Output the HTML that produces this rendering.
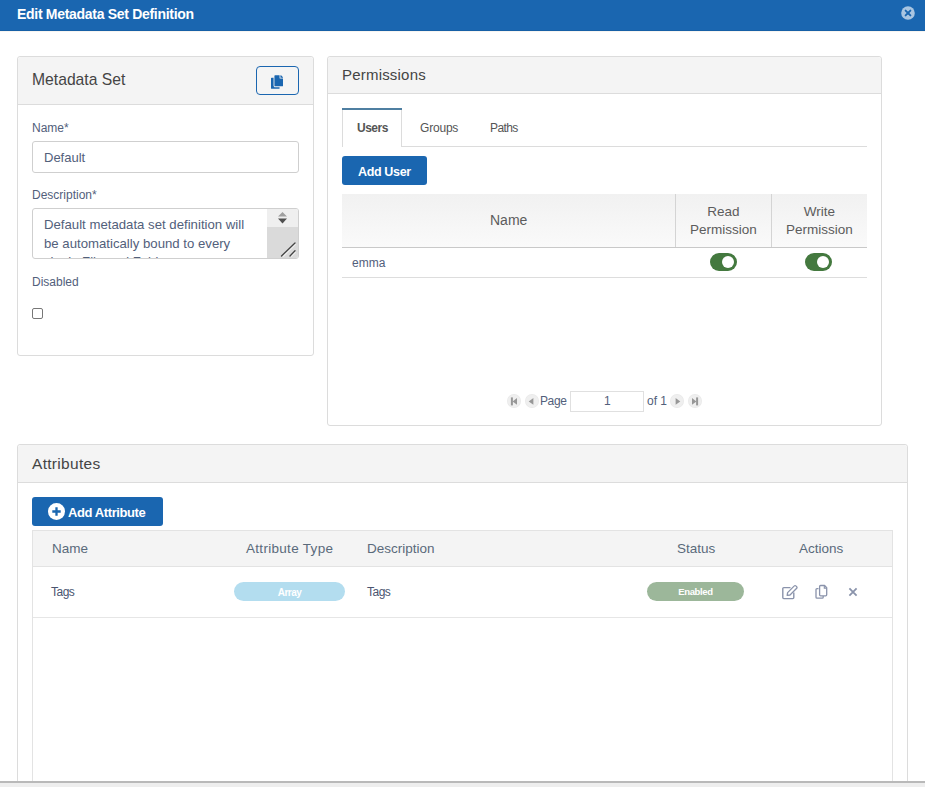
<!DOCTYPE html>
<html><head><meta charset="utf-8">
<style>
*{box-sizing:border-box;margin:0;padding:0}
html,body{width:925px;height:787px;overflow:hidden;background:#fff;font-family:"Liberation Sans",sans-serif;position:relative}
.a{position:absolute}
.t{position:absolute;white-space:nowrap;line-height:1}
.panel{position:absolute;border:1px solid #dcdcdc;border-radius:3px;background:#fff}
.ph{position:absolute;left:0;top:0;right:0;background:#f4f4f4;border-bottom:1px solid #dcdcdc;border-radius:3px 3px 0 0}
.lbl{color:#52607b;font-size:12px}
.ptxt{color:#444;font-size:15px}
svg{position:absolute;overflow:visible}
</style></head><body>
<!-- header -->
<div class="a" style="left:0;top:0;width:925px;height:31px;background:#1a66b0;border-bottom:1px solid #1660a6"></div>
<div class="t" style="left:17px;top:7px;font-size:14px;font-weight:bold;color:#fff;letter-spacing:-0.3px">Edit Metadata Set Definition</div>
<svg style="left:901px;top:5.5px" width="14" height="14" viewBox="0 0 14 14"><circle cx="7" cy="7" r="6.8" fill="#a9c5e1"/><path d="M4.6 4.6L9.4 9.4M9.4 4.6L4.6 9.4" stroke="#1a66b0" stroke-width="1.9" stroke-linecap="round"/></svg>

<div class="a" style="left:0;top:31px;width:925px;height:1px;background:#f8f5f1"></div>
<!-- Metadata Set panel -->
<div class="panel" style="left:17px;top:56px;width:297px;height:300px"><div class="ph" style="height:48px"></div></div>
<div class="t ptxt" style="left:32px;top:72px;font-size:15.7px">Metadata Set</div>
<div class="a" style="left:256px;top:66px;width:43px;height:29px;border:1.5px solid #1a66b0;border-radius:4px;background:#f4f4f4"></div>
<svg style="left:271px;top:74.8px" width="12" height="14" viewBox="0 0 448 512"><path fill="#1a66b0" d="M320 448v40c0 13.255-10.745 24-24 24H24c-13.255 0-24-10.745-24-24V120c0-13.255 10.745-24 24-24h72v296c0 30.879 25.121 56 56 56h168zm0-344V0H152c-13.255 0-24 10.745-24 24v368c0 13.255 10.745 24 24 24h272c13.255 0 24-10.745 24-24V128H344c-13.2 0-24-10.8-24-24zm120.971-31.029L375.029 7.029A24 24 0 0 0 358.059 0H352v96h96v-6.059a24 24 0 0 0-7.029-16.97z"/></svg>

<div class="t lbl" style="left:32px;top:122px">Name*</div>
<div class="a" style="left:32px;top:141px;width:267px;height:32px;border:1px solid #cfcfcf;border-radius:3px"></div>
<div class="t" style="left:44px;top:151px;font-size:13px;color:#52607b">Default</div>

<div class="t lbl" style="left:32px;top:189px">Description*</div>
<div class="a" style="left:32px;top:208px;width:267px;height:51px;border:1px solid #cfcfcf;border-radius:3px;overflow:hidden">
  <div class="a" style="left:11px;top:7px;width:240px;font-size:13.2px;line-height:18.6px;color:#52607b">Default metadata set definition will<br>be automatically bound to every<br>single File and Folder</div>
  <div class="a" style="left:234px;top:0;width:32px;height:18px;background:#efefef"></div>
  <div class="a" style="left:234px;top:18px;width:32px;height:32px;background:#dadada"></div>
</div>
<svg style="left:277px;top:211px" width="11" height="14" viewBox="0 0 11 14"><path d="M1 5.5L5.5 1L10 5.5Z" fill="#a0a0a0"/><path d="M1 7.5L10 7.5L5.5 12.5Z" fill="#505050"/></svg>
<svg style="left:280px;top:241px" width="17" height="17" viewBox="0 0 17 17"><path d="M3 15.6L15.6 3M11 15.6L15.6 11" stroke="#f2f2f2" stroke-width="1.2"/><path d="M1.5 15L15 2M10 15L15 9.7" stroke="#444" stroke-width="1.3" stroke-linecap="round"/></svg>

<div class="t lbl" style="left:32px;top:276px">Disabled</div>
<div class="a" style="left:32px;top:308px;width:11px;height:11px;border:1px solid #777;border-radius:2px"></div>

<!-- Permissions panel -->
<div class="panel" style="left:327px;top:56px;width:555px;height:370px"><div class="ph" style="height:37px"></div></div>
<div class="t ptxt" style="left:342px;top:67px;letter-spacing:0.2px">Permissions</div>

<!-- tabs -->
<div class="a" style="left:342px;top:146px;width:525px;height:1px;background:#dcdcdc"></div>
<div class="a" style="left:342px;top:108px;width:60px;height:39px;background:#fff;border:1px solid #dcdcdc;border-bottom:none"></div><div class="a" style="left:342px;top:108px;width:60px;height:2px;background:#4f7fa1"></div>
<div class="t" style="left:357px;top:122px;font-size:12px;font-weight:bold;color:#555;letter-spacing:-0.5px">Users</div>
<div class="t" style="left:420px;top:122px;font-size:12px;color:#555;letter-spacing:-0.2px">Groups</div>
<div class="t" style="left:490px;top:122px;font-size:12px;color:#555;letter-spacing:-0.6px">Paths</div>

<div class="a" style="left:342px;top:156px;width:85px;height:29px;background:#1a66b0;border-radius:3px"></div>
<div class="t" style="left:358px;top:166px;font-size:12.5px;font-weight:bold;color:#fff;letter-spacing:-0.35px">Add User</div>

<!-- permissions table -->
<div class="a" style="left:342px;top:194px;width:525px;height:54px;background:linear-gradient(#f1f1f1,#fafafa);border-bottom:1px solid #c9c9c9"></div>
<div class="a" style="left:675px;top:194px;width:1px;height:53px;background:#d4d4d4"></div>
<div class="a" style="left:771px;top:194px;width:1px;height:53px;background:#d4d4d4"></div>
<div class="t" style="left:490px;top:213px;font-size:14px;color:#5c5c5c">Name</div>
<div class="t" style="left:676px;width:95px;text-align:center;top:203px;font-size:13.5px;line-height:18px;white-space:normal;color:#5c5c5c">Read<br>Permission</div>
<div class="t" style="left:772px;width:95px;text-align:center;top:203px;font-size:13.5px;line-height:18px;white-space:normal;color:#5c5c5c">Write<br>Permission</div>
<div class="a" style="left:342px;top:277px;width:525px;height:1px;background:#dddddd"></div>
<div class="t" style="left:352px;top:257px;font-size:12px;color:#52607b">emma</div>
<div class="a" style="left:710px;top:253px;width:27px;height:18px;border-radius:9px;background:#44793f"></div>
<div class="a" style="left:721.5px;top:256px;width:12px;height:12px;border-radius:50%;background:#fff"></div>
<div class="a" style="left:805px;top:253px;width:27px;height:18px;border-radius:9px;background:#44793f"></div>
<div class="a" style="left:816.5px;top:256px;width:12px;height:12px;border-radius:50%;background:#fff"></div>

<!-- pagination -->
<svg style="left:507px;top:393.5px" width="14" height="14" viewBox="0 0 14 14"><circle cx="7" cy="7" r="7" fill="#e9e9e9"/><circle cx="7" cy="7" r="6.3" fill="#efefef"/><path d="M3.9 3.4h2v8h-2Z" fill="#979797"/><path d="M10 4L5.6 7.4L10 10.8Z" fill="#979797"/></svg>
<svg style="left:525px;top:393.5px" width="14" height="14" viewBox="0 0 14 14"><circle cx="7" cy="7" r="7" fill="#e9e9e9"/><circle cx="7" cy="7" r="6.3" fill="#efefef"/><path d="M8.4 4L3.7 7.4L8.4 10.8Z" fill="#979797"/></svg>
<div class="t" style="left:540px;top:395px;font-size:12px;color:#52607b;letter-spacing:-0.4px">Page</div>
<div class="a" style="left:570px;top:391px;width:74px;height:21px;border:1px solid #e0e0e0"></div>
<div class="t" style="left:604px;top:395px;font-size:12px;color:#52607b">1</div>
<div class="t" style="left:647px;top:395px;font-size:12px;color:#52607b">of 1</div>
<svg style="left:670px;top:393.5px" width="14" height="14" viewBox="0 0 14 14"><circle cx="7" cy="7" r="7" fill="#e9e9e9"/><circle cx="7" cy="7" r="6.3" fill="#efefef"/><path d="M5.6 4L10.3 7.4L5.6 10.8Z" fill="#979797"/></svg>
<svg style="left:688px;top:393.5px" width="14" height="14" viewBox="0 0 14 14"><circle cx="7" cy="7" r="7" fill="#e9e9e9"/><circle cx="7" cy="7" r="6.3" fill="#efefef"/><path d="M8.1 3.4h2v8h-2Z" fill="#979797"/><path d="M4 4L8.4 7.4L4 10.8Z" fill="#979797"/></svg>

<!-- Attributes panel -->
<div class="panel" style="left:17px;top:444px;width:891px;height:400px"><div class="ph" style="height:38px"></div></div>
<div class="t ptxt" style="left:32px;top:456px;font-size:15.5px;letter-spacing:0.3px">Attributes</div>

<div class="a" style="left:32px;top:497px;width:131px;height:29px;background:#1a66b0;border-radius:3px"></div>
<svg style="left:47.5px;top:502.5px" width="17" height="17" viewBox="0 0 17 17"><circle cx="8.5" cy="8.5" r="8.5" fill="#fff"/><path d="M8.5 4.3v8.4M4.3 8.5h8.4" stroke="#1a66b0" stroke-width="2.3"/></svg>
<div class="t" style="left:68px;top:506px;font-size:13px;font-weight:bold;color:#fff;letter-spacing:-0.4px">Add Attribute</div>

<!-- attributes table -->
<div class="a" style="left:32px;top:530px;width:861px;height:300px;border:1px solid #e3e3e3"></div>
<div class="a" style="left:33px;top:531px;width:859px;height:36px;background:#f4f4f4;border-bottom:1px solid #e3e3e3"></div>
<div class="a" style="left:33px;top:617px;width:859px;height:1px;background:#e6e6e6"></div>
<div class="t" style="left:52px;top:542px;font-size:13.5px;color:#5a6a7b">Name</div>
<div class="t" style="left:246px;top:542px;font-size:13.5px;color:#5a6a7b;letter-spacing:0.3px">Attribute Type</div>
<div class="t" style="left:367px;top:542px;font-size:13.5px;color:#5a6a7b">Description</div>
<div class="t" style="left:677px;top:542px;font-size:13.5px;color:#5a6a7b">Status</div>
<div class="t" style="left:799px;top:542px;font-size:13.5px;color:#5a6a7b">Actions</div>

<div class="t" style="left:51px;top:586px;font-size:12px;color:#4a5570;letter-spacing:-0.5px">Tags</div>
<div class="a" style="left:234px;top:582px;width:111px;height:19px;border-radius:9.5px;background:#b3ddef"></div>
<div class="t" style="left:234px;width:111px;text-align:center;top:587.5px;font-size:10px;font-weight:bold;color:#fff;letter-spacing:-0.5px">Array</div>
<div class="t" style="left:367px;top:586px;font-size:12px;color:#4a5570;letter-spacing:-0.5px">Tags</div>
<div class="a" style="left:647px;top:582px;width:97px;height:19px;border-radius:9.5px;background:#9cb79a"></div>
<div class="t" style="left:647px;width:97px;text-align:center;top:587px;font-size:9.5px;font-weight:bold;color:#fff;letter-spacing:-0.35px">Enabled</div>

<svg style="left:781px;top:584px" width="18" height="16" viewBox="0 0 18 16"><path d="M9.5 3.6H2.8a1 1 0 0 0-1 1V13.6a1 1 0 0 0 1 1H11.8a1 1 0 0 0 1-1V8.5" fill="none" stroke="#8a93ab" stroke-width="1.4"/><path d="M6.2 11.4L6.6 8.6L13.3 1.9a1.1 1.1 0 0 1 1.6 0l0.8 0.8a1.1 1.1 0 0 1 0 1.6L9 11Z" fill="none" stroke="#8a93ab" stroke-width="1.3" stroke-linejoin="round"/></svg>
<svg style="left:815px;top:585px" width="13" height="15" viewBox="0 0 13 15"><path d="M3.5 3.6H2a1 1 0 0 0-1 1V12.2a1 1 0 0 0 1 1H7.2a1 1 0 0 0 1-1V11" fill="none" stroke="#8a93ab" stroke-width="1.3"/><path d="M4.6 1.5a1 1 0 0 1 1-1H9.6L11.7 2.6V9.8a1 1 0 0 1-1 1H5.6a1 1 0 0 1-1-1Z" fill="none" stroke="#8a93ab" stroke-width="1.3" stroke-linejoin="round"/><path d="M9.3 0.8V3.1H11.5" fill="none" stroke="#8a93ab" stroke-width="1.1"/></svg>
<svg style="left:848px;top:587px" width="10" height="10" viewBox="0 0 10 10"><path d="M1.4 1.4L8.6 8.6M8.6 1.4L1.4 8.6" stroke="#8a93ab" stroke-width="1.8"/></svg>

<!-- bottom -->
<div class="a" style="left:0;top:781px;width:925px;height:2px;background:#b9b9b9"></div>
<div class="a" style="left:0;top:783px;width:925px;height:4px;background:#eeeeee"></div>
</body></html>
